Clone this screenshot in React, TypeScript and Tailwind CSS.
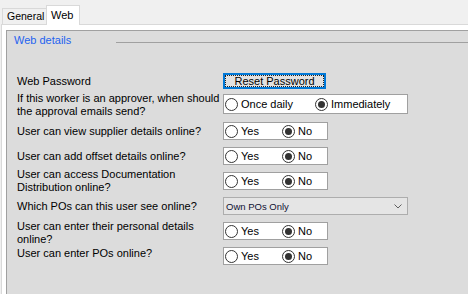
import React from "react";

function Radio({ checked }: { checked?: boolean }) {
  return (
    <span className="w-[13px] h-[13px] rounded-full border border-[#333333] bg-white flex items-center justify-center shrink-0">
      {checked ? <span className="w-[7px] h-[7px] rounded-full bg-[#333333]" /> : null}
    </span>
  );
}

function RadioItem({ label, checked, w }: { label: string; checked?: boolean; w?: string }) {
  return (
    <div className={`flex items-center gap-[3px] ${w ?? ""}`}>
      <Radio checked={checked} />
      <span>{label}</span>
    </div>
  );
}

function YesNo() {
  return (
    <div className="w-[105px] h-[18px] border border-[#a0a0a0] bg-white flex items-center pl-[1px]">
      <RadioItem label="Yes" w="w-[57px]" />
      <RadioItem label="No" checked />
    </div>
  );
}

function Row({
  label,
  children,
  h,
  mt,
  labelCls,
}: {
  label: React.ReactNode;
  children: React.ReactNode;
  h: string;
  mt: string;
  labelCls?: string;
}) {
  return (
    <div className={`flex items-center ${h} ${mt}`}>
      <div className={`w-[206px] shrink-0 leading-[13px] ${labelCls ?? ""}`}>{label}</div>
      {children}
    </div>
  );
}

export default function App() {
  return (
    <div
      className="w-[468px] h-[294px] bg-[#f0f0f0] overflow-hidden flex flex-col text-[11px] leading-[13px] text-black"
      style={{ fontFamily: '"Liberation Sans", Arial, sans-serif' }}
    >
      {/* Tab strip */}
      <div className="h-[24px] flex items-end pl-[2px] shrink-0">
        <div className="w-[44px] h-[16px] border-t border-l border-[#d9d9d9] bg-[#f0f0f0] pl-[4px] flex items-center text-[10.5px] whitespace-nowrap">
          General
        </div>
        <div className="w-[34px] h-[20px] border-t border-l border-r border-[#d9d9d9] bg-white pl-[4px] flex items-center relative z-10 -mb-px">
          Web
        </div>
      </div>
      {/* Tab page */}
      <div className="flex-1 ml-[1px] border-t border-l border-[#d9d9d9] bg-white pt-[5px] pl-[4px] flex">
        <div className="flex-1 border-t border-l border-[#a0a0a0] bg-[#dcdcdc] flex flex-col">
          <div className="flex items-start mt-[3px] pl-[7px]">
            <div className="w-[102px] text-[#1f63f0]">Web details</div>
            <div className="flex-1 h-px bg-[#a0a0a0] mt-[8px]" />
          </div>
          <div className="mt-[26px] pl-[10px] flex flex-col">
            <Row label="Web Password" h="h-[16px]" mt="mt-0">
              <button className="w-[103px] h-[16px] border-2 border-[#0078d7] bg-[#e1e1e1] p-0 flex">
                <span className="flex-1 border border-dotted border-[#222222] flex items-center justify-center leading-[11px]">
                  Reset Password
                </span>
              </button>
            </Row>
            <Row
              label={
                <>
                  If this worker is an approver, when should
                  <br />
                  the approval emails send?
                </>
              }
              h="h-[20px]"
              mt="mt-[5px]"
              labelCls="mt-[2px]"
            >
              <div className="w-[185px] h-[20px] border border-[#a0a0a0] bg-white flex items-center pl-[1px]">
                <RadioItem label="Once daily" w="w-[90px]" />
                <RadioItem label="Immediately" checked />
              </div>
            </Row>
            <Row label="User can view supplier details online?" h="h-[18px]" mt="mt-[8px]">
              <YesNo />
            </Row>
            <Row label="User can add offset details online?" h="h-[18px]" mt="mt-[7px]">
              <YesNo />
            </Row>
            <Row
              label={
                <>
                  User can access Documentation
                  <br />
                  Distribution online?
                </>
              }
              h="h-[18px]"
              mt="mt-[7px]"
            >
              <YesNo />
            </Row>
            <Row label="Which POs can this user see online?" h="h-[18px]" mt="mt-[7px]" labelCls="mt-[1px]">
              <div className="w-[185px] h-[18px] border border-[#adadad] bg-[#e5e5e5] flex items-center pl-[2px] pr-[5px]">
                <span className="flex-1 text-[9.5px] text-[#111133]">Own POs Only</span>
                <svg width="8" height="5" viewBox="0 0 8 5" className="shrink-0">
                  <path d="M0.5 0.5 L4 4 L7.5 0.5" fill="none" stroke="#606060" strokeWidth="1" />
                </svg>
              </div>
            </Row>
            <Row
              label={
                <>
                  User can enter their personal details
                  <br />
                  online?
                </>
              }
              h="h-[18px]"
              mt="mt-[7px]"
              labelCls="mt-[3px]"
            >
              <YesNo />
            </Row>
            <Row label="User can enter POs online?" h="h-[18px]" mt="mt-[7px]" labelCls="mb-[5px]">
              <YesNo />
            </Row>
          </div>
        </div>
      </div>
    </div>
  );
}
